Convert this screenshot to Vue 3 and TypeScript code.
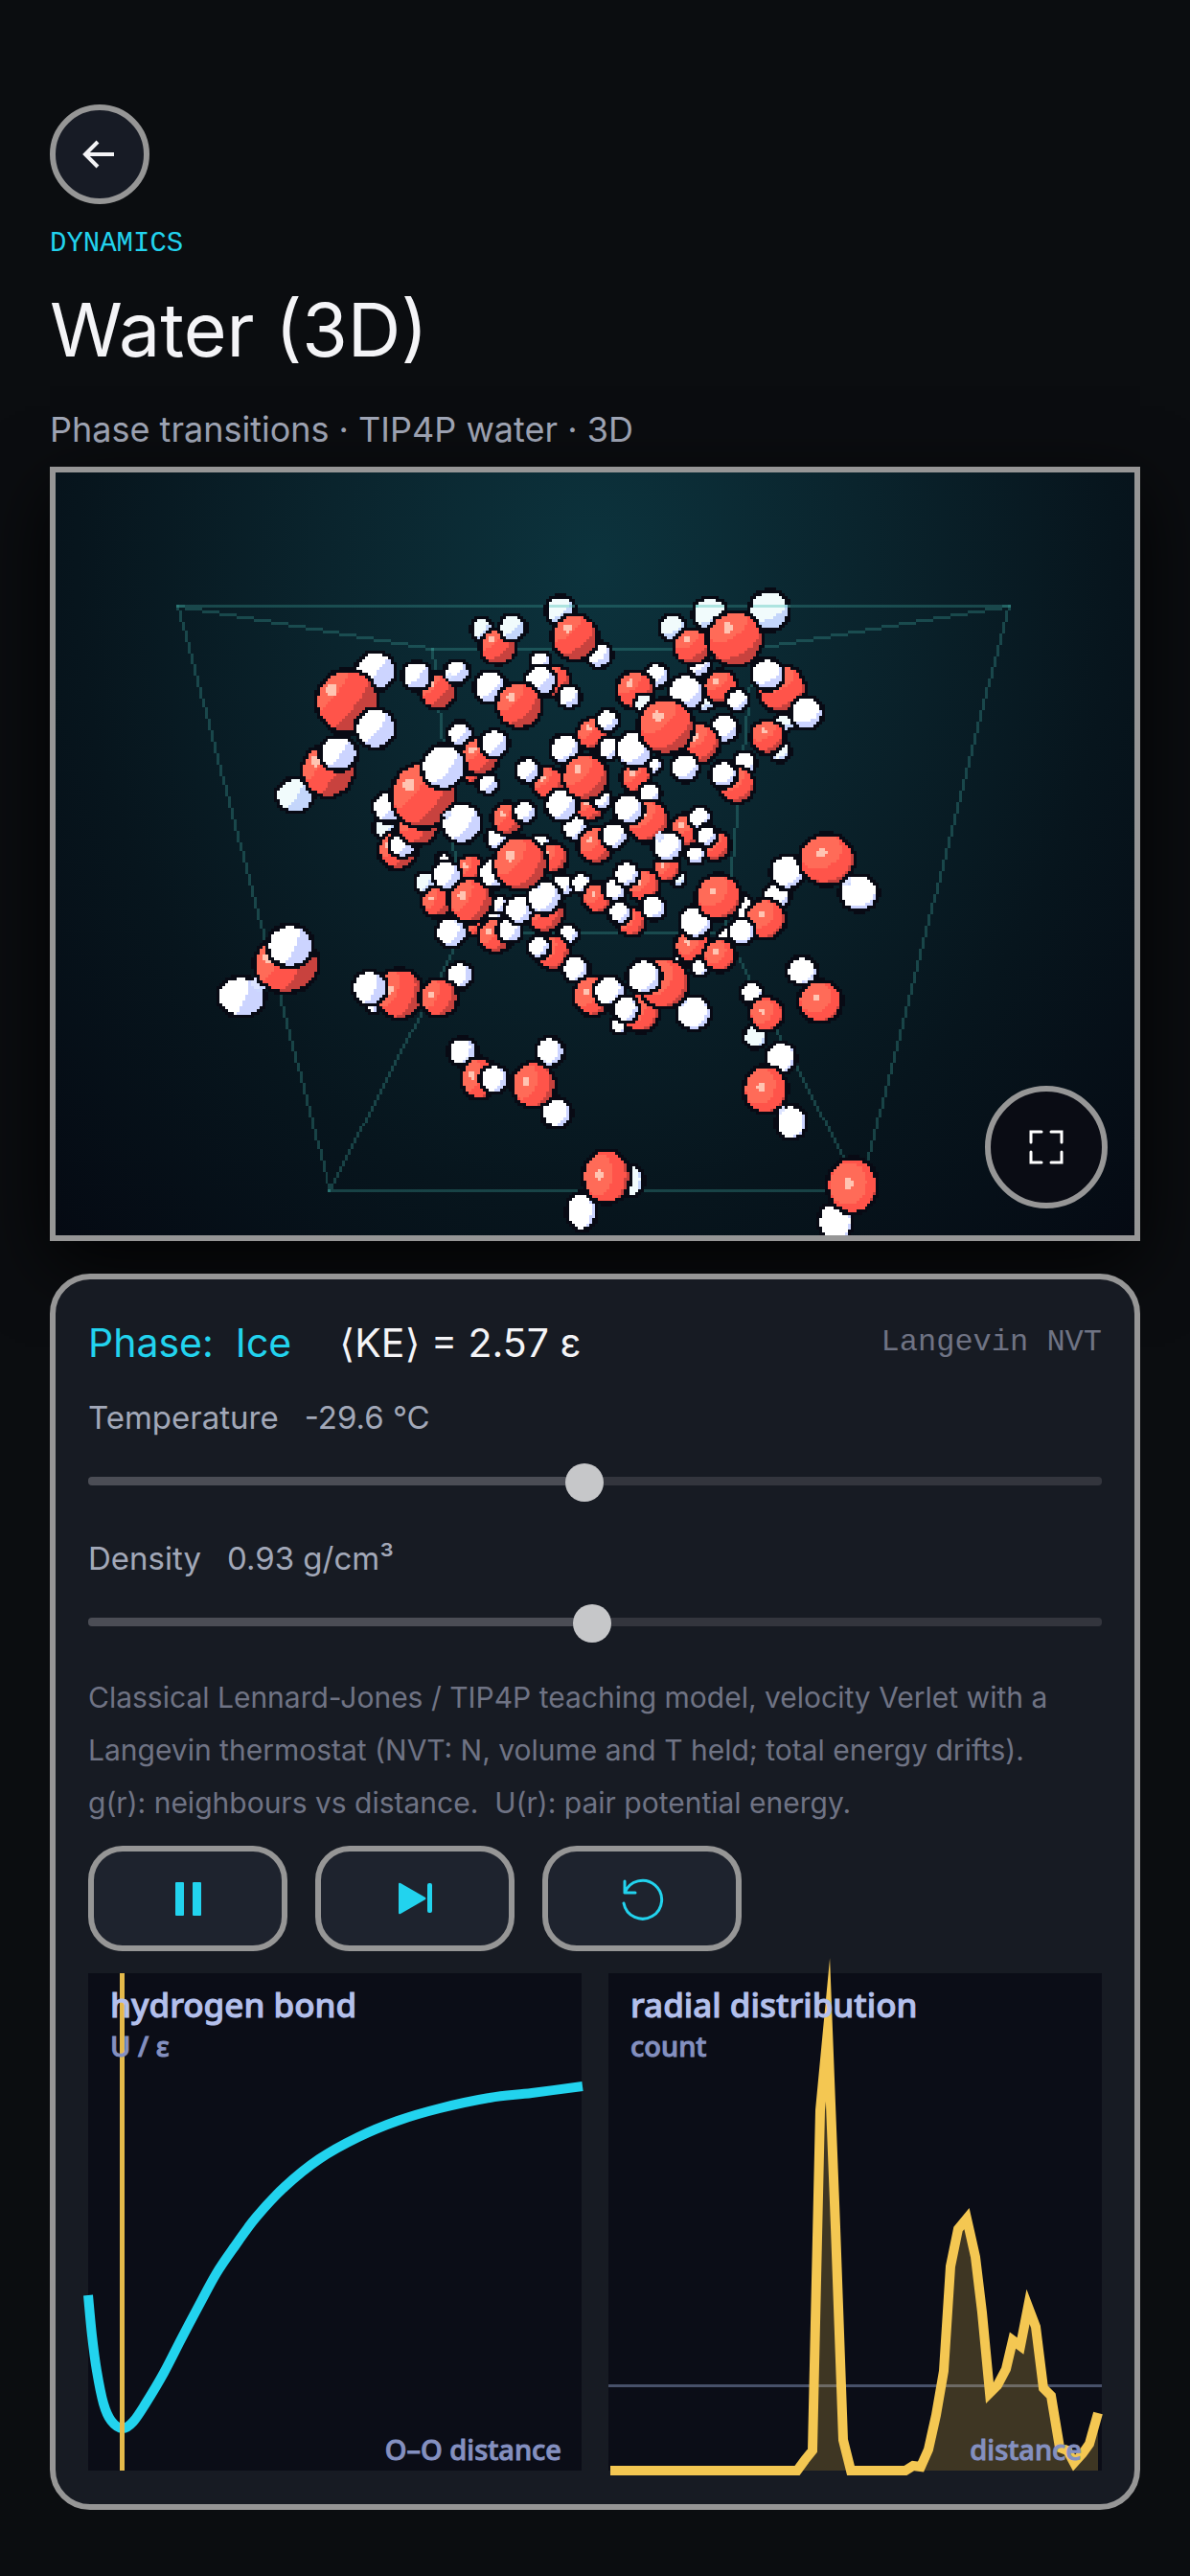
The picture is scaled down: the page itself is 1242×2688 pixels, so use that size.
<script setup lang="ts">
import { computed, onMounted, ref } from 'vue'

type Kind = 'O' | 'H' | 'h' | 'b'
type Atom = [Kind, number, number, number, number?]

const SCENE_W = 1126
const SCENE_H = 796
const PIXEL = 3

const temperature = ref(-29.6)
const density = ref(0.93)
const running = ref(true)
const view = ref<HTMLCanvasElement | null>(null)

const temperatureFill = computed(() => (Number(temperature.value) + 150) / 246)
const densityFill = computed(() => (Number(density.value) - 0.5) / 0.865)

// Atoms from back to front: kind, centre x, centre y, radius, optional vertical radius.
// O oxygen, H hydrogen, h hydrogen in the haze, b end of a bond.
const atoms: Atom[] = [
  ['O', 435, 319, 4], ['H', 452, 326, 8], ['O', 439, 475, 6], ['H', 457, 464, 6], ['H', 464, 452, 6],
  ['h', 651, 425, 5], ['O', 639, 414, 11], ['H', 625, 307, 6], ['O', 607, 320, 13], ['H', 621, 336, 9],
  ['O', 559, 350, 12], ['H', 571, 342, 8], ['O', 659, 374, 14], ['H', 673, 361, 9],
  ['O', 689, 390, 13], ['H', 669, 400, 7], ['H', 680, 380, 8],
  ['H', 462, 383, 9], ['O', 473, 362, 14], ['H', 491, 355, 9],
  ['H', 507, 390, 8], ['O', 520, 403, 13], ['H', 530, 432, 9], ['O', 515, 325, 14], ['H', 494, 312, 10],
  ['H', 507, 198, 8], ['O', 522, 219, 14], ['H', 507, 218, 13], ['H', 537, 235, 9],
  ['O', 562, 274, 14], ['H', 577, 260, 9], ['H', 579, 289, 9],
  ['h', 679, 240, 7], ['O', 695, 225, 15], ['H', 713, 239, 9],
  ['h', 763, 260, 8], ['h', 757, 292, 8], ['O', 744, 277, 15],
  ['h', 446, 164, 8, 10], ['O', 463, 182, 16], ['h', 478, 162, 11],
  ['H', 673, 202, 9], ['h', 645, 162, 11], ['b', 652, 170, 3], ['O', 665, 182, 16],
  ['O', 400, 229, 16], ['H', 420, 209, 10], ['b', 413, 215, 3], ['H', 378, 213, 12],
  ['H', 628, 213, 10], ['O', 606, 228, 17], ['h', 615, 242, 7],
  ['H', 699, 268, 12], ['b', 689, 273, 4], ['O', 673, 284, 18], ['H', 658, 309, 12],
  ['H', 720, 304, 9], ['O', 712, 327, 16], ['H', 698, 316, 11],
  ['H', 423, 274, 10], ['b', 430, 282, 3], ['O', 444, 297, 17], ['H', 459, 284, 12],
  ['h', 346, 372, 10], ['O', 358, 395, 17], ['H', 363, 389, 11], ['O', 379, 368, 19], ['H', 348, 350, 13],
  ['h', 387, 429, 8], ['b', 392, 436, 3], ['O', 399, 449, 13], ['O', 434, 415, 12], ['H', 406, 406, 5], ['H', 409, 421, 12],
  ['H', 543, 372, 10], ['b', 551, 380, 4], ['O', 565, 390, 16], ['H', 584, 380, 11],
  ['O', 619, 365, 19], ['H', 599, 352, 13], ['H', 640, 391, 13], ['b', 631, 381, 4],
  ['H', 550, 430, 8], ['O', 567, 445, 13], ['H', 585, 436, 9],
  ['O', 615, 432, 14], ['H', 597, 420, 10], ['H', 625, 455, 10],
  ['O', 602, 470, 12], ['H', 590, 460, 9],
  ['O', 460, 484, 15], ['H', 475, 479, 10], ['O', 511, 460, 18], ['H', 485, 457, 12],
  ['H', 536, 483, 8], ['O', 520, 502, 15], ['H', 505, 496, 9],
  ['H', 414, 481, 13], ['b', 422, 468, 4], ['O', 434, 448, 20],
  ['H', 455, 225, 14], ['b', 468, 233, 4], ['O', 485, 244, 21],
  ['h', 528, 144, 12], ['H', 568, 191, 11], ['O', 543, 172, 21],
  ['H', 659, 231, 16], ['H', 605, 290, 16], ['O', 638, 266, 26],
  ['H', 533, 290, 13], ['b', 541, 300, 4], ['H', 529, 348, 14], ['b', 542, 335, 4], ['O', 554, 319, 21],
  ['O', 759, 227, 22], ['H', 744, 211, 14], ['H', 785, 252, 14],
  ['h', 684, 148, 15], ['h', 746, 144, 18], ['b', 730, 161, 4], ['O', 710, 174, 26],
  ['h', 250, 338, 17, 15], ['b', 265, 327, 4], ['O', 285, 312, 25], ['H', 296, 294, 17, 15],
  ['H', 335, 208, 18], ['b', 323, 219, 4], ['O', 305, 240, 30], ['H', 335, 268, 18],
  ['O', 385, 338, 31], ['H', 406, 308, 20], ['H', 425, 367, 18], ['b', 410, 358, 3],
  ['H', 459, 419, 13], ['H', 511, 444, 15], ['b', 502, 429, 5], ['O', 486, 409, 25],
  ['H', 655, 510, 7], ['O', 666, 495, 16], ['H', 674, 517, 7], ['H', 701, 485, 6], ['O', 694, 505, 14],
  ['H', 719, 455, 8, 11], ['H', 754, 442, 11], ['O', 742, 467, 18], ['H', 717, 480, 11],
  ['H', 669, 470, 14], ['b', 678, 458, 4], ['O', 693, 444, 21],
  ['H', 765, 418, 15], ['H', 840, 440, 18, 16], ['b', 826, 426, 5], ['O', 806, 405, 26, 24],
  ['H', 780, 521, 13, 12], ['b', 789, 533, 4], ['O', 799, 553, 20, 19],
  ['H', 728, 544, 9], ['h', 731, 590, 9, 10], ['b', 736, 580, 3], ['O', 743, 566, 15],
  ['H', 544, 519, 11], ['b', 551, 530, 4], ['O', 562, 547, 18], ['H', 579, 542, 13],
  ['H', 590, 577, 7], ['O', 611, 565, 17], ['H', 667, 565, 15], ['b', 654, 552, 4],
  ['O', 636, 534, 23], ['H', 615, 527, 15], ['H', 596, 561, 11],
  ['H', 194, 548, 22, 18], ['b', 212, 535, 6], ['O', 241, 514, 31, 27], ['H', 245, 495, 21, 19],
  ['H', 332, 560, 3], ['O', 360, 545, 23], ['H', 329, 539, 15],
  ['H', 423, 526, 11], ['b', 413, 536, 4], ['O', 401, 549, 17],
  ['H', 426, 606, 12], ['b', 433, 617, 4], ['O', 443, 634, 16, 19], ['H', 459, 635, 12],
  ['H', 517, 606, 12, 13], ['b', 509, 619, 4], ['H', 524, 670, 13], ['b', 515, 657, 4], ['O', 500, 641, 20, 21],
  ['h', 603, 741, 9, 14], ['H', 550, 773, 13, 17], ['b', 560, 756, 4], ['O', 576, 737, 22, 25],
  ['H', 758, 613, 13, 14], ['b', 750, 626, 4], ['H', 769, 680, 13, 15], ['b', 757, 666, 4], ['O', 742, 646, 20, 22],
  ['H', 815, 784, 15, 18], ['b', 822, 768, 5], ['O', 833, 746, 24, 26],
]

const boxEdges: number[][] = [
  [128, 140, 997, 140], [128, 140, 287, 750], [997, 140, 842, 750], [287, 750, 842, 750],
  [395, 184, 730, 184], [395, 184, 426, 480], [730, 184, 700, 480], [426, 480, 700, 480],
  [128, 140, 395, 184], [997, 140, 730, 184], [287, 750, 426, 480], [842, 750, 700, 480],
]

const tones: Record<Kind, string[]> = {
  O: ['#c8423e', '#ff544a', '#ff6b58', '#ffc4b2'],
  H: ['#ccd4ff', '#ffffff', '#ffffff', '#ffffff'],
  h: ['#c4d6fb', '#f1fbfc', '#f1fbfc', '#f1fbfc'],
  b: ['#ccd8ff', '#dde4ff', '#dde4ff', '#ffffff'],
}

function drawAtom(ctx: CanvasRenderingContext2D, [kind, ax, ay, arx, ary]: Atom) {
  const cx = ax / PIXEL
  const cy = ay / PIXEL
  const rx = (arx + 1) / PIXEL
  const ry = ((ary ?? arx) + 1) / PIXEL
  const hx = -0.34 + 0.00065 * (ax - 582)
  const hy = -0.38 + 0.00066 * (ay - 267)
  const hz = Math.sqrt(1 - hx * hx - hy * hy)
  const lx = 2 * hz * hx
  const ly = 2 * hz * hy
  const lz = 2 * hz * hz - 1
  const dark = kind === 'O' ? -0.16 : 0.04
  const edge = kind === 'b' ? 0 : 1.4
  for (let y = Math.floor(cy - ry - 2); y <= cy + ry + 2; y++) {
    for (let x = Math.floor(cx - rx - 2); x <= cx + rx + 2; x++) {
      const dx = x + 0.5 - cx
      const dy = y + 0.5 - cy
      const u = dx / rx
      const v = dy / ry
      const d = u * u + v * v
      if (d <= 1) {
        const light = u * lx + v * ly + Math.sqrt(1 - d) * lz
        let tone = light < dark ? 0 : light < 0.56 ? 1 : 2
        if (arx > 9 && (u - hx) ** 2 + (v - hy) ** 2 < 0.04) tone = 3
        ctx.fillStyle = tones[kind][tone]
        ctx.fillRect(x, y, 1, 1)
      } else if (edge && (dx / (rx + edge)) ** 2 + (dy / (ry + edge)) ** 2 <= 1) {
        ctx.fillStyle = '#080a14'
        ctx.fillRect(x, y, 1, 1)
      }
    }
  }
}

function drawEdge(ctx: CanvasRenderingContext2D, edge: number[]) {
  const [x1, y1, x2, y2] = edge.map((n) => n / PIXEL)
  const steps = Math.ceil(Math.max(Math.abs(x2 - x1), Math.abs(y2 - y1)))
  for (let i = 0; i <= steps; i++) {
    const t = i / steps
    ctx.fillRect(Math.floor(x1 + (x2 - x1) * t), Math.floor(y1 + (y2 - y1) * t), 1, 1)
  }
}

onMounted(() => {
  const ctx = view.value?.getContext('2d')
  if (!ctx) return
  ctx.fillStyle = 'rgba(56, 150, 145, 0.36)'
  boxEdges.forEach((edge) => drawEdge(ctx, edge))
  atoms.forEach((atom) => drawAtom(ctx, atom))
  ctx.fillStyle = 'rgba(90, 200, 190, 0.45)'
  ;[[516, 540], [669, 698], [730, 765]].forEach(([from, to]) => drawEdge(ctx, [from, 140, to, 140]))
})

const bond: number[][] = [
  [0, 336], [4, 378], [9, 415], [16, 449], [24, 467], [36, 475], [47, 468], [60, 449], [79, 417],
  [97, 382], [116, 346], [134, 313], [153, 285], [175, 255], [205, 223], [241, 194], [282, 171],
  [323, 154], [367, 141], [419, 130], [463, 125], [516, 118],
]

const radial: number[][] = [
  [2, 519], [197, 519], [205, 508], [213, 498], [221, 143], [229, 59], [237, 265], [245, 487], [253, 519],
  [310, 519], [318, 514], [326, 515], [334, 497], [342, 461], [350, 415], [357, 306], [365, 267],
  [374, 256], [383, 296], [390, 354], [398, 438], [406, 430], [415, 413], [422, 383], [430, 389],
  [438, 348], [446, 369], [454, 433], [462, 441], [471, 495], [479, 498], [486, 511], [495, 501],
  [502, 491], [511, 459],
]

function smooth(points: number[][]) {
  let d = `M${points[0].join(' ')}`
  for (let i = 0; i < points.length - 1; i++) {
    const a = points[Math.max(i - 1, 0)]
    const b = points[i]
    const c = points[i + 1]
    const e = points[Math.min(i + 2, points.length - 1)]
    d += `C${b[0] + (c[0] - a[0]) / 6} ${b[1] + (c[1] - a[1]) / 6} ${c[0] - (e[0] - b[0]) / 6} ${c[1] - (e[1] - b[1]) / 6} ${c[0]} ${c[1]}`
  }
  return d
}

const bondPath = smooth(bond)
const radialLine = radial.map((p) => p.join(',')).join(' ')
const radialArea = `2,519 ${radialLine} 511,519`
</script>

<template>
  <main class="page">
    <header class="head">
      <button class="back" type="button" aria-label="Back">
        <svg viewBox="0 0 40 40" width="40" height="40" fill="none" stroke="#f4f4f6" stroke-width="4">
          <path d="M35 20H5M18 7 5 20l13 13" />
        </svg>
      </button>
      <p class="kicker">DYNAMICS</p>
      <h1>Water (3D)</h1>
      <p class="subtitle">Phase transitions · TIP4P water · 3D</p>
    </header>

    <section class="viewport" aria-label="Simulation">
      <canvas ref="view" :width="Math.ceil(SCENE_W / PIXEL)" :height="Math.ceil(SCENE_H / PIXEL)"></canvas>
      <button class="expand" type="button" aria-label="Full screen">
        <svg viewBox="0 0 36 36" width="36" height="36" fill="none" stroke="#fff" stroke-width="3" stroke-linecap="round">
          <path d="M2 13V2h11M23 2h11v11M34 23v11H23M13 34H2V23" />
        </svg>
      </button>
    </section>

    <section class="panel">
      <div class="status">
        <span class="phase">Phase:&nbsp; Ice</span>
        <span class="energy">⟨KE⟩ = 2.57 ε</span>
        <span class="method">Langevin NVT</span>
      </div>

      <div class="control">
        <label for="temperature"><span>Temperature</span><span>{{ Number(temperature).toFixed(1) }} °C</span></label>
        <input id="temperature" v-model="temperature" type="range" min="-150" max="96" step="0.1" :style="{ '--fill': temperatureFill }" />
      </div>
      <div class="control">
        <label for="density"><span>Density</span><span>{{ Number(density).toFixed(2) }} g/cm³</span></label>
        <input id="density" v-model="density" type="range" min="0.5" max="1.365" step="0.005" :style="{ '--fill': densityFill }" />
      </div>

      <p class="note">
        Classical Lennard-Jones / TIP4P teaching model, velocity Verlet with a<br />
        Langevin thermostat (NVT: N, volume and T held; total energy drifts).<br />
        g(r): neighbours vs distance.&nbsp; U(r): pair potential energy.
      </p>

      <div class="actions">
        <button type="button" :aria-label="running ? 'Pause' : 'Play'" @click="running = !running">
          <svg viewBox="0 0 48 48" width="48" height="48" fill="#22d3ee">
            <template v-if="running">
              <rect x="11" y="7" width="9" height="35" rx="1" />
              <rect x="29" y="7" width="9" height="35" rx="1" />
            </template>
            <path v-else d="M14 7v34l26-17z" />
          </svg>
        </button>
        <button type="button" aria-label="Step">
          <svg viewBox="0 0 48 48" width="48" height="48" fill="#22d3ee">
            <path d="M7 9q0-2 2-1l26 15q1 1 0 2L9 40q-2 1-2-1z" />
            <rect x="37" y="8" width="5" height="31" rx="2" />
          </svg>
        </button>
        <button type="button" aria-label="Reset">
          <svg viewBox="0 0 48 48" width="48" height="48" fill="none" stroke="#22d3ee" stroke-width="3" stroke-linecap="round" stroke-linejoin="round">
            <path d="M5 29A20 20 0 1 0 6 18M6 6v12h11" />
          </svg>
        </button>
      </div>

      <div class="charts">
        <figure>
          <svg viewBox="0 0 515 519">
            <path :d="bondPath" fill="none" stroke="#22d3ee" stroke-width="10" />
            <path d="M35.5 0V519" stroke="#e4b94a" stroke-width="5" />
          </svg>
          <figcaption>
            <strong>hydrogen bond</strong>
            <span>U / ε</span>
            <span class="axis">O–O distance</span>
          </figcaption>
        </figure>
        <figure>
          <svg viewBox="0 0 515 519">
            <path d="M0 430.5H515" stroke="#475069" stroke-width="3" />
            <polygon :points="radialArea" fill="#f4c752" fill-opacity="0.22" />
            <polyline :points="radialLine" fill="none" stroke="#f4c752" stroke-width="10" stroke-miterlimit="24" />
          </svg>
          <figcaption>
            <strong>radial distribution</strong>
            <span>count</span>
            <span class="axis">distance</span>
          </figcaption>
        </figure>
      </div>
    </section>
  </main>
</template>

<style>
body {
  margin: 0;
  background: #0b0d10;
}
</style>

<style scoped>
.page {
  box-sizing: border-box;
  min-height: 100vh;
  padding: 109px 52px 69px;
  font-family: Inter, 'Noto Sans', 'DejaVu Sans', sans-serif;
  color: #f4f4f7;
}

button {
  display: flex;
  align-items: center;
  justify-content: center;
  box-sizing: border-box;
  padding: 0;
  border: 6px solid #969696;
  cursor: pointer;
}

.head {
  display: flex;
  flex-direction: column;
  align-items: flex-start;
}

.back {
  width: 104px;
  height: 104px;
  border-radius: 50%;
  background: #171b25;
}

p,
h1,
figure {
  margin: 0;
}

.kicker {
  margin-top: 24px;
  font: 29px/36px 'Liberation Mono', monospace;
  color: #22d3ee;
}

h1 {
  margin-top: 23px;
  font-size: 77px;
  line-height: 96px;
  font-weight: 400;
}

.subtitle {
  margin-top: 32px;
  font-size: 36px;
  line-height: 48px;
  color: #a2a8b8;
}

.viewport {
  position: relative;
  margin-top: 15px;
  border: 6px solid #969696;
  background: radial-gradient(ellipse at 50% 12%, #0c333d 0%, #0a242d 35%, #07151d 68%, #050a13 100%);
  box-shadow: 0 24px 72px rgba(0, 0, 0, 0.85);
}

canvas {
  display: block;
  width: 100%;
  aspect-ratio: 1126 / 796;
  image-rendering: pixelated;
}

.expand {
  position: absolute;
  right: 28px;
  bottom: 28px;
  width: 128px;
  height: 128px;
  border-radius: 50%;
  background: #0a0c14;
}

.panel {
  position: relative;
  margin-top: 34px;
  padding: 38px 34px 35px;
  border: 6px solid #969696;
  border-radius: 42px;
  background: #171b23;
}

.status {
  display: flex;
  align-items: center;
  font-size: 41px;
  line-height: 56px;
}

.phase {
  color: #22d3ee;
}

.energy {
  margin-left: 50px;
}

.method {
  margin-left: auto;
  font: 32px/48px 'Liberation Mono', monospace;
  color: #6f7384;
}

.control {
  margin-top: 28px;
}

.control + .control {
  margin-top: 39px;
}

label {
  display: flex;
  gap: 27px;
  font-size: 33px;
  line-height: 44px;
  color: #a2a8b8;
}

input {
  --stop: calc(20px + (100% - 40px) * var(--fill));
  display: block;
  appearance: none;
  width: 100%;
  height: 40px;
  margin: 24px 0 0;
  background: none;
}

input::-webkit-slider-runnable-track {
  height: 9px;
  border-radius: 4px;
  background: linear-gradient(to right, #4b4d55 var(--stop), #33353d var(--stop));
}

input::-webkit-slider-thumb {
  appearance: none;
  width: 40px;
  height: 40px;
  margin-top: -14px;
  border-radius: 50%;
  background: #c6c7c9;
}

.note {
  margin-top: 32px;
  font-size: 30px;
  line-height: 55px;
  color: #6f7384;
}

.actions {
  display: flex;
  gap: 29px;
  margin-top: 17px;
}

.actions button {
  width: 208px;
  height: 110px;
  border-radius: 36px;
  background: #1e232e;
}

.charts {
  display: grid;
  grid-template-columns: 1fr 1fr;
  gap: 28px;
  margin-top: 23px;
}

figure {
  position: relative;
  background: #0b0d17;
}

figure svg {
  display: block;
  width: 100%;
  overflow: visible;
}

figcaption {
  position: absolute;
  inset: 0;
  display: flex;
  flex-direction: column;
  padding: 9px 21px 3px 23px;
  font: 500 29px/38px 'Noto Sans', sans-serif;
  -webkit-text-stroke: 1px currentColor;
  color: #8490c0;
}

strong {
  font-size: 35px;
  line-height: 48px;
  font-weight: 500;
  color: #b4c0ec;
}

.axis {
  margin-top: auto;
  align-self: flex-end;
}
</style>
